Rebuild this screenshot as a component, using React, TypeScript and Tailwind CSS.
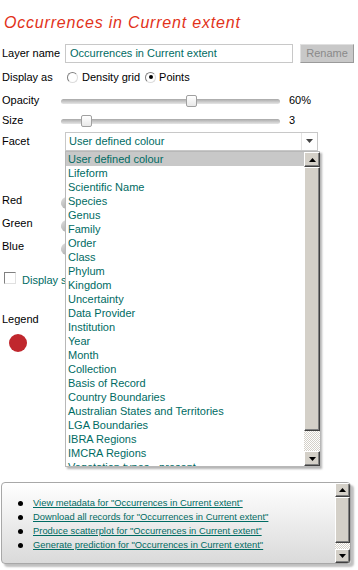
import React from 'react';

const TEAL = 'text-[#006b63]';

const FACETS = [
  'User defined colour',
  'Lifeform',
  'Scientific Name',
  'Species',
  'Genus',
  'Family',
  'Order',
  'Class',
  'Phylum',
  'Kingdom',
  'Uncertainty',
  'Data Provider',
  'Institution',
  'Year',
  'Month',
  'Collection',
  'Basis of Record',
  'Country Boundaries',
  'Australian States and Territories',
  'LGA Boundaries',
  'IBRA Regions',
  'IMCRA Regions',
  'Vegetation types - present',
];

const LINKS = [
  'View metadata for "Occurrences in Current extent"',
  'Download all records for "Occurrences in Current extent"',
  'Produce scatterplot for "Occurrences in Current extent"',
  'Generate prediction for "Occurrences in Current extent"',
];

// Classic windows bevel used by the scrollbars
const BEVEL =
  'bg-[#d4d0c8] border border-t-white border-l-white border-r-[#404040] border-b-[#404040] shadow-[inset_-1px_-1px_0_#808080]';

function Arrow({ up }: { up?: boolean }) {
  return (
    <svg width="7" height="4" viewBox="0 0 7 4">
      {up ? <polygon points="0,4 7,4 3.5,0" fill="#000" /> : <polygon points="0,0 7,0 3.5,4" fill="#000" />}
    </svg>
  );
}

function ScrollBar({ btn, thumb, className }: { btn: string; thumb: string; className?: string }) {
  return (
    <div className={`flex flex-col ${className ?? ''}`}>
      <div className={`${BEVEL} ${btn} flex items-center justify-center`}>
        <Arrow up />
      </div>
      <div className={`${BEVEL} ${thumb}`} />
      <div className="flex-1 bg-[repeating-conic-gradient(#d4d0c8_0%_25%,#ffffff_0%_50%)] bg-[length:2px_2px]" />
      <div className={`${BEVEL} ${btn} flex items-center justify-center`}>
        <Arrow />
      </div>
    </div>
  );
}

function Slider({ pos, width = 'w-[219px]', round }: { pos: number; width?: string; round?: boolean }) {
  return (
    <div className={`relative h-[5px] ${width} rounded-full bg-gradient-to-b from-[#a8a8a8] to-[#e6e6e6]`}>
      <div
        className={
          round
            ? 'absolute top-[-4px] w-[12px] h-[12px] rounded-full bg-gradient-to-br from-[#e0e0e0] to-[#9c9c9c]'
            : 'absolute top-[-4px] w-[11px] h-[12px] rounded-[2px] border border-[#a0a0a0] bg-gradient-to-b from-white to-[#e8e8e8]'
        }
        style={{ left: pos }}
      />
    </div>
  );
}

function Label({ children }: { children: React.ReactNode }) {
  return <div className="w-[61px] shrink-0 pl-[2px] whitespace-nowrap text-[11px] text-black">{children}</div>;
}

function Radio({ checked }: { checked?: boolean }) {
  return (
    <span className="w-[11px] h-[11px] rounded-full border border-t-[#808080] border-l-[#808080] border-r-[#dcdcdc] border-b-[#dcdcdc] bg-white flex items-center justify-center">
      {checked && <span className="w-[4px] h-[4px] rounded-full bg-black" />}
    </span>
  );
}

export default function App() {
  return (
    <div
      className="relative w-[358px] h-[570px] overflow-hidden bg-white"
      style={{ fontFamily: '"Liberation Sans", Arial, sans-serif' }}
    >
      <div className="flex flex-col">
        <div className="h-[43px] pt-[13px] pl-[4px] text-[16px] leading-[20px] italic tracking-[0.8px] text-[#e2321a]">
          Occurrences in Current extent
        </div>

        {/* Layer name */}
        <div className="h-[21px] flex items-center">
          <Label>Layer name</Label>
          <div className="ml-[4px] w-[228px] h-[19px] border border-[#c8c8c8] flex items-center pl-[4px]">
            <span className={`text-[11px] ${TEAL}`}>Occurrences in Current extent</span>
          </div>
          <div className="ml-[7px] w-[54px] h-[19px] bg-[#c8c8c8] border border-t-[#e0e0e0] border-l-[#e0e0e0] border-r-[#9a9a9a] border-b-[#9a9a9a] flex items-center justify-center text-[11px] text-[#8a8a8a]">
            Rename
          </div>
        </div>

        {/* Display as */}
        <div className="h-[26px] flex items-center">
          <Label>Display as</Label>
          <div className="ml-[6px] flex items-center text-[11px] text-black">
            <Radio />
            <span className="ml-[4px]">Density grid</span>
            <span className="ml-[5px]">
              <Radio checked />
            </span>
            <span className="ml-[3px]">Points</span>
          </div>
        </div>

        {/* Opacity */}
        <div className="h-[20px] flex items-center">
          <Label>Opacity</Label>
          <div className="mt-[3px]">
            <Slider pos={125} />
          </div>
          <span className="ml-[9px] text-[11px] text-black">60%</span>
        </div>

        {/* Size */}
        <div className="h-[20px] flex items-center">
          <Label>Size</Label>
          <div className="mt-[3px]">
            <Slider pos={20} />
          </div>
          <span className="ml-[9px] text-[11px] text-black">3</span>
        </div>

        {/* Facet */}
        <div className="h-[22px] flex items-center">
          <Label>Facet</Label>
          <div className="ml-[4px] w-[253px] h-[19px] border border-[#c8c8c8] flex items-center">
            <span className={`flex-1 pl-[3px] text-[11px] ${TEAL}`}>User defined colour</span>
            <div className="w-[16px] h-full border-l border-[#e4e4e4] flex items-center justify-center">
              <svg width="7" height="4" viewBox="0 0 7 4">
                <polygon points="0,0 7,0 3.5,4" fill="#444" />
              </svg>
            </div>
          </div>
        </div>

        <div className="h-[37px]" />

        {['Red', 'Green', 'Blue'].map((c) => (
          <div key={c} className="h-[23px] flex items-center">
            <Label>{c}</Label>
            <div className="mt-[5px]">
              <Slider pos={0} width="w-[200px]" round />
            </div>
          </div>
        ))}

        {/* Display checkbox (cut by the open dropdown) */}
        <div className="mt-[9px] h-[22px] w-[65px] flex items-center pl-[4px] overflow-hidden">
          <span className="shrink-0 w-[12px] h-[12px] border border-t-[#808080] border-l-[#808080] border-r-[#e0e0e0] border-b-[#e0e0e0] bg-white" />
          <span className={`ml-[6px] mt-[5px] whitespace-nowrap text-[11px] ${TEAL}`}>Display selected area only</span>
        </div>

        {/* Legend */}
        <div className="mt-[20px] h-[20px] flex items-center pl-[2px] text-[11px] text-black">Legend</div>
        <div className="mt-[5px] ml-[9px] w-[18px] h-[18px] rounded-full bg-[#c0272d]" />

        {/* Actions panel */}
        <div className="mt-[130px] ml-[1px] w-[350px] h-[82px] rounded-[4px] border border-[#a8a8a8] bg-gradient-to-b from-white to-[#dadada] shadow-[3px_3px_2px_rgba(0,0,0,0.25)] flex overflow-hidden">
          <ul className="flex-1 pt-[13px] pl-[16px]">
            {LINKS.map((l) => (
              <li key={l} className="h-[14px] flex items-center">
                <span className="w-[5px] h-[5px] rounded-full bg-black" />
                <span className={`ml-[10px] text-[9.4px] leading-[14px] underline ${TEAL}`}>{l}</span>
              </li>
            ))}
          </ul>
          <ScrollBar className="w-[15px] h-full" btn="h-[14px]" thumb="h-[46px]" />
        </div>
      </div>

      {/* Open facet dropdown */}
      <div className="absolute left-[65px] top-[151px] w-[255px] h-[316px] bg-white border border-[#b8b8b8] border-r-0 shadow-[2px_2px_2px_rgba(0,0,0,0.3)] flex">
        <div className="flex-1 overflow-hidden">
          {FACETS.map((f, i) => (
            <div
              key={f}
              className={`h-[14px] pl-[2px] text-[11px] leading-[14px] whitespace-nowrap ${TEAL} ${i === 0 ? 'bg-[#c8c8c8]' : ''}`}
            >
              {f}
            </div>
          ))}
        </div>
        <ScrollBar className="w-[16px] h-full" btn="h-[15px]" thumb="h-[264px]" />
      </div>
    </div>
  );
}
